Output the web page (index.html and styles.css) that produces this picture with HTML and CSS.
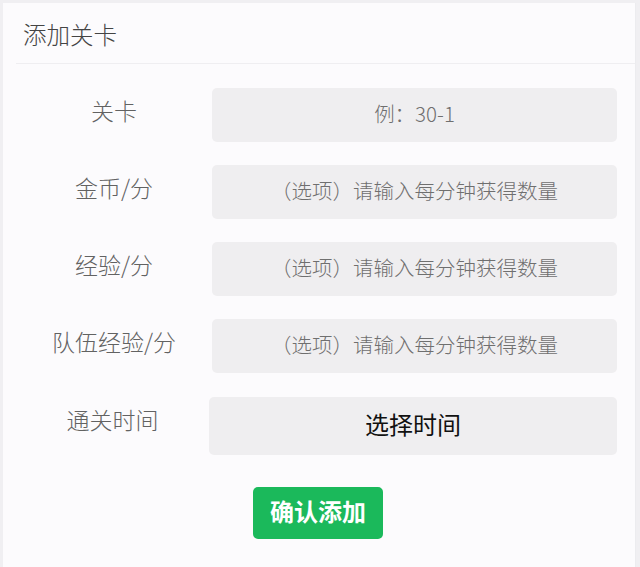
FILE: index.html
```html
<!DOCTYPE html>
<html lang="zh-CN">
<head>
<meta charset="utf-8">
<title>添加关卡</title>
<link rel="stylesheet" href="styles.css">
</head>
<body>
<div class="card">
  <div class="card-header">添加关卡</div>
  <form class="form">
    <div class="row">
      <label class="label">关卡</label>
      <input class="field" type="text" placeholder="例：30-1">
    </div>
    <div class="row">
      <label class="label">金币/分</label>
      <input class="field" type="text" placeholder="（选项）请输入每分钟获得数量">
    </div>
    <div class="row">
      <label class="label">经验/分</label>
      <input class="field" type="text" placeholder="（选项）请输入每分钟获得数量">
    </div>
    <div class="row">
      <label class="label">队伍经验/分</label>
      <input class="field" type="text" placeholder="（选项）请输入每分钟获得数量">
    </div>
    <div class="row row-time">
      <label class="label">通关时间</label>
      <div class="picker">选择时间</div>
    </div>
    <div class="actions">
      <button class="submit" type="button">确认添加</button>
    </div>
  </form>
</div>
</body>
</html>
```

FILE: styles.css
```css
html, body {
  margin: 0;
  padding: 0;
  height: 100%;
}

body {
  background: #f0eff2;
  font-family: "Noto Sans CJK SC", "Noto Sans", "Liberation Sans", sans-serif;
  font-weight: 300;
  overflow: hidden;
}

.card {
  margin: 3px 4px 0 3px;
  background: #fcfbfd;
  border-right: 1px solid #ececef;
  height: calc(100% - 3px);
  box-sizing: border-box;
}

.card-header {
  margin-left: 13px;
  padding: 4px 0 0 7px;
  line-height: 55px;
  font-size: 23.5px;
  color: #444;
  border-bottom: 1px solid #efeef1;
  box-sizing: border-box;
  height: 61px;
}

.form {
  display: flex;
  flex-direction: column;
  gap: 23px;
  padding: 24px 18px 0 13px;
}

.row {
  display: flex;
  align-items: center;
  height: 54px;
}

.label {
  width: 196px;
  flex: none;
  text-align: center;
  font-size: 23px;
  line-height: 30px;
  color: #626262;
  padding-bottom: 11px;
}

.field {
  flex: 1;
  min-width: 0;
  height: 54px;
  box-sizing: border-box;
  border: none;
  border-radius: 5px;
  background: #efeef0;
  font-family: inherit;
  font-weight: 300;
  font-size: 20.5px;
  color: #333;
  text-align: center;
  outline: none;
  padding: 0 10px 5px;
}

.field::placeholder {
  color: #6f6f6f;
  opacity: 1;
}

.row-time {
  height: 58px;
  margin-top: 1px;
}

.row-time .label {
  width: 193px;
  padding-bottom: 14px;
}

.picker {
  flex: 1;
  height: 58px;
  line-height: 54px;
  border-radius: 5px;
  background: #efeef0;
  text-align: center;
  font-size: 24px;
  font-weight: 400;
  color: #111;
}

.actions {
  display: flex;
  justify-content: flex-start;
  padding-left: 237px;
  margin-top: 9px;
}

.submit {
  width: 130px;
  height: 52px;
  border: none;
  border-radius: 5px;
  background: #1bb95b;
  color: #fff;
  font-family: inherit;
  font-size: 24px;
  font-weight: bold;
  padding: 0 0 5px;
}
```
